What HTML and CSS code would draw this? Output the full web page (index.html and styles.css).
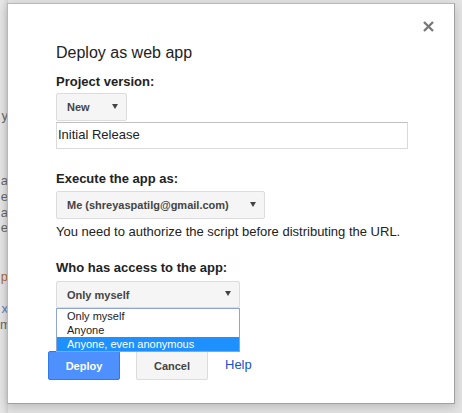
FILE: index.html
```html
<!DOCTYPE html>
<html>
<head>
<meta charset="utf-8">
<link rel="stylesheet" href="styles.css">
</head>
<body>
<div class="page">
  <div class="bg-col">
    <div class="bg-line l-y">y</div>
    <div class="bg-line l-a1">a</div>
    <div class="bg-line l-e1">e</div>
    <div class="bg-line l-a2">a</div>
    <div class="bg-line l-e2">e</div>
    <div class="bg-line l-p">p</div>
    <div class="bg-line l-x">x</div>
    <div class="bg-line l-m">m</div>
  </div>
</div>
<div class="dialog">
  <button class="close" aria-label="Close">
    <svg width="11" height="11" viewBox="0 0 11 11"><path d="M1 1L10 10M10 1L1 10" stroke="#777" stroke-width="2.3" fill="none"/></svg>
  </button>
  <h1 class="title">Deploy as web app</h1>
  <div class="label label-first">Project version:</div>
  <div class="select sel-new"><span>New</span><span class="arrow"></span></div>
  <div class="input">Initial Release</div>
  <div class="label label-exec">Execute the app as:</div>
  <div class="select sel-me"><span>Me (shreyaspatilg@gmail.com)</span><span class="arrow"></span></div>
  <div class="hint">You need to authorize the script before distributing the URL.</div>
  <div class="label label-who">Who has access to the app:</div>
  <div class="select-wrap">
    <div class="select sel-who"><span>Only myself</span><span class="arrow"></span></div>
    <ul class="options">
      <li>Only myself</li>
      <li>Anyone</li>
      <li class="selected">Anyone, even anonymous</li>
    </ul>
  </div>
  <div class="buttons">
    <button class="btn btn-primary">Deploy</button>
    <button class="btn btn-default">Cancel</button>
    <a class="help" href="#">Help</a>
  </div>
</div>
</body>
</html>
```
FILE: styles.css
```css
html, body {
  margin: 0;
  padding: 0;
}
body {
  width: 462px;
  height: 413px;
  overflow: hidden;
  background: #e3e3e3;
  font-family: "Liberation Sans", Arial, sans-serif;
  color: #222;
}
.page {
  display: flex;
}
.bg-col {
  width: 8px;
  text-align: right;
  font-size: 13px;
  line-height: 16px;
  color: #666;
  background: linear-gradient(to right, #e6e6e6 0, #e2e2e2 4px, #d6d6d6 7px);
  height: 413px;
}
.bg-line { height: 16px; }
.l-y { margin-top: 108px; }
.l-a1 { margin-top: 49px; }
.l-e1 { margin-top: 0; }
.l-a2 { margin-top: 0; }
.l-e2 { margin-top: -1px; }
.l-p { margin-top: 33px; color: #a86a3a; }
.l-x { margin-top: 16px; color: #5a7ab0; }
.l-m { margin-top: 0; }

.dialog {
  position: absolute;
  left: 7px;
  top: 3px;
  width: 448px;
  height: 401px;
  box-sizing: border-box;
  background: #fff;
  border: 1px solid #b8b8b8;
  border-right-color: #a0a0a0;
  border-bottom-color: #a0a0a0;
  box-shadow: 0 3px 10px rgba(0,0,0,0.18);
  padding: 39px 47px 0 48px;
}
.close {
  position: absolute;
  right: 20px;
  top: 17px;
  width: 11px;
  height: 11px;
  padding: 0;
  border: 0;
  background: none;
  display: block;
}
.close svg { display: block; }
.title {
  margin: 0;
  font-size: 16px;
  line-height: 19px;
  font-weight: normal;
  color: #222;
}
.label {
  font-size: 13px;
  line-height: 15px;
  font-weight: bold;
  color: #222;
}
.label-first { margin-top: 12px; }
.label-exec { margin-top: 22px; }
.label-who { margin-top: 21px; }
.select {
  box-sizing: border-box;
  height: 28px;
  display: flex;
  align-items: center;
  justify-content: space-between;
  padding: 0 8px 0 10px;
  background: #f5f5f5;
  border: 1px solid #dcdcdc;
  border-radius: 2px;
  font-size: 11px;
  font-weight: bold;
  color: #444;
}
.arrow {
  width: 0;
  height: 0;
  border-left: 3px solid transparent;
  border-right: 3px solid transparent;
  border-top: 5px solid #444;
  margin-top: -2px;
}
.sel-new { width: 71px; margin-top: 4px; }
.sel-me { width: 209px; margin-top: 5px; }
.select-wrap {
  position: relative;
  width: 184px;
  margin-top: 6px;
}
.sel-who { width: 184px; height: 27px; }
.input {
  box-sizing: border-box;
  height: 27px;
  margin-top: 1px;
  border: 1px solid #d9d9d9;
  border-top-color: #c0c0c0;
  padding: 0 1px;
  font-size: 13px;
  line-height: 24px;
  color: #222;
  width: 352px;
}
.hint {
  margin-top: 5px;
  font-size: 13px;
  line-height: 15px;
  color: #222;
}
.options {
  position: absolute;
  left: 0;
  top: 27px;
  width: 184px;
  box-sizing: border-box;
  margin: 0;
  padding: 0;
  list-style: none;
  background: #fff;
  border: 1px solid #8ea6cf;
  z-index: 2;
}
.options li {
  height: 14px;
  line-height: 14px;
  padding-left: 10px;
  font-size: 11px;
  color: #222;
}
.options li.selected {
  background: #1e90ff;
  color: #fff;
}
.buttons {
  display: flex;
  align-items: center;
  margin-top: 43px;
  margin-left: -8px;
}
.btn {
  box-sizing: border-box;
  width: 72px;
  height: 29px;
  border-radius: 2px;
  font-family: "Liberation Sans", Arial, sans-serif;
  font-size: 11px;
  font-weight: bold;
  padding: 0;
}
.btn-primary {
  background: #4d90fe;
  border: 1px solid #3079ed;
  color: #fff;
}
.btn-default {
  margin-left: 16px;
  background: #f5f5f5;
  border: 1px solid #dcdcdc;
  color: #444;
}
.help {
  margin-left: 17px;
  font-size: 13px;
  color: #15c;
  text-decoration: none;
  margin-top: -2px;
}
```
